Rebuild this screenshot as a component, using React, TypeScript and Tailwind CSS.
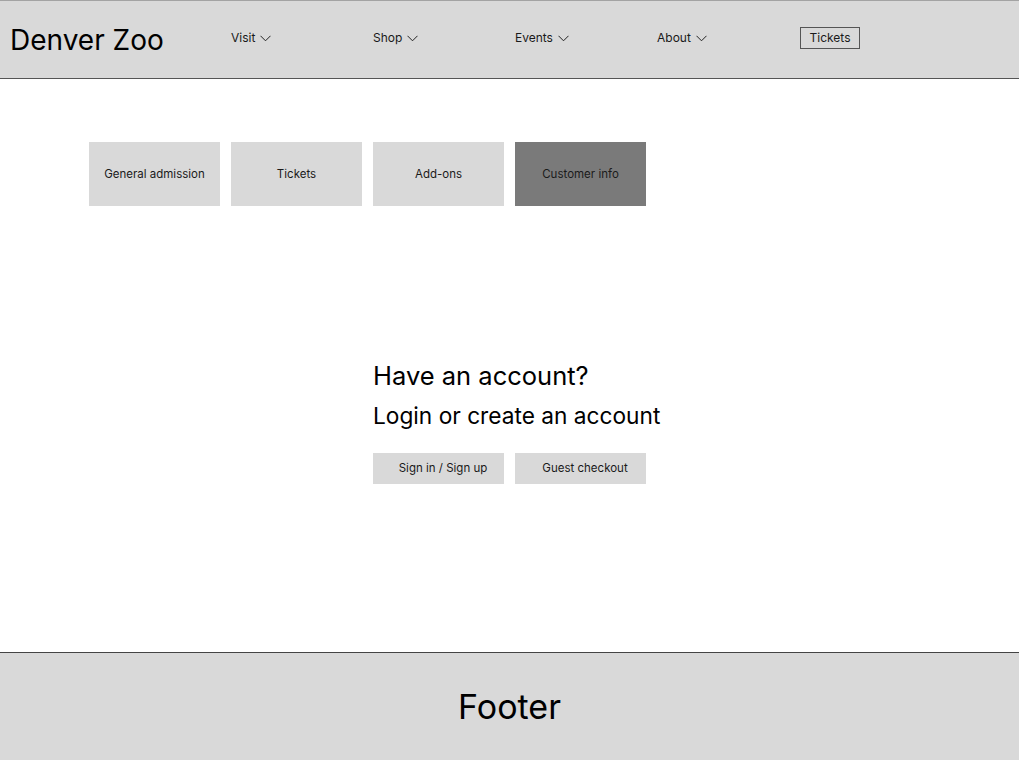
import React from "react";

const Chevron = () => (
  <svg width="11" height="7" viewBox="0 0 11 7" className="ml-[5px]" fill="none">
    <polyline points="0.5,0.8 5.5,5.8 10.5,0.8" stroke="#222" strokeWidth="1" />
  </svg>
);

const NavItem = ({ label }: { label: string }) => (
  <div className="w-[142px] flex items-center text-[12px] text-[#1a1a1a] -mt-[3px]">
    <span>{label}</span>
    <Chevron />
  </div>
);

export default function App() {
  const font = { fontFamily: "Inter, 'Noto Sans', sans-serif" };
  return (
    <div className="w-[1019px] h-[760px] bg-white flex flex-col" style={font}>
      <header className="h-[79px] bg-[#d9d9d9] border-t border-t-[#a3a3a3] border-b border-b-[#555555] flex items-center">
        <div className="w-[231px] pl-[10px] text-[28px] text-black leading-none">Denver Zoo</div>
        <NavItem label="Visit" />
        <NavItem label="Shop" />
        <NavItem label="Events" />
        <NavItem label="About" />
        <div className="ml-[1px] -mt-[3px] w-[60px] h-[22px] border border-[#555555] flex items-center justify-center text-[12px] text-[#1a1a1a]">
          Tickets
        </div>
      </header>
      <main className="h-[573px] flex flex-col">
        <div className="flex gap-[11px] pl-[89px] pt-[63px]">
          {["General admission", "Tickets", "Add-ons", "Customer info"].map((s, i) => (
            <div
              key={s}
              className={`w-[131px] h-[64px] pt-[2px] flex items-center justify-center text-[11.5px] text-[#1a1a1a] ${
                i === 3 ? "bg-[#7a7a7a]" : "bg-[#d9d9d9]"
              }`}
            >
              {s}
            </div>
          ))}
        </div>
        <div className="pl-[373px] pt-[155px] flex flex-col">
          <div className="text-[25.5px] leading-[30px] text-black">Have an account?</div>
          <div className="text-[22.7px] leading-[28px] mt-[11px] text-black">Login or create an account</div>
          <div className="flex gap-[11px] mt-[23px]">
            <div className="w-[131px] h-[31px] pl-[9px] bg-[#d9d9d9] flex items-center justify-center text-[11.5px] text-[#1a1a1a]">
              Sign in / Sign up
            </div>
            <div className="w-[131px] h-[31px] pl-[9px] bg-[#d9d9d9] flex items-center justify-center text-[11.5px] text-[#1a1a1a]">
              Guest checkout
            </div>
          </div>
        </div>
      </main>
      <footer className="flex-1 bg-[#d9d9d9] border-t border-t-[#444444] flex items-center justify-center">
        <span className="text-[34px] text-black">Footer</span>
      </footer>
    </div>
  );
}
